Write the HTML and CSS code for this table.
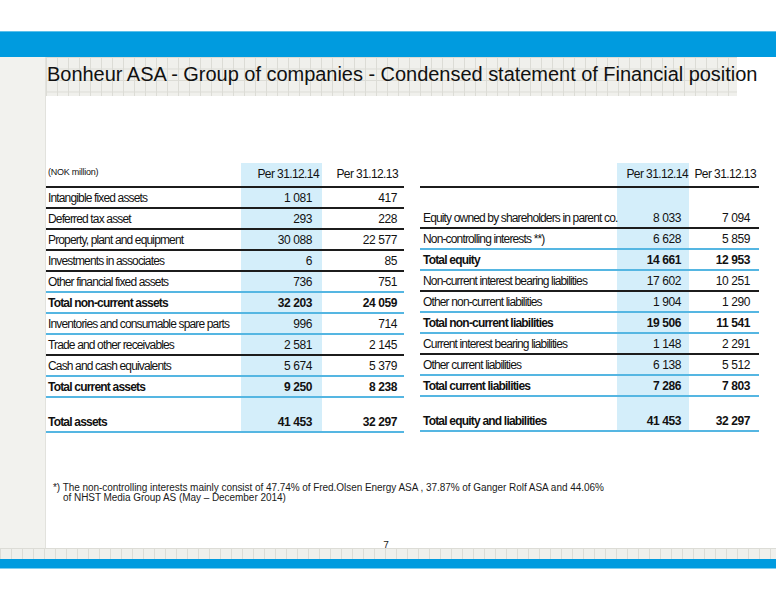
FILE: index.html
```html
<!DOCTYPE html>
<html lang="en">
<head>
    <meta charset="UTF-8">
    <meta name="viewport" content="width=device-width, initial-scale=1.0">
    <title>Bonheur ASA - Condensed statement of Financial position</title>
    <link rel="stylesheet" href="styles.css">
</head>
<body>
    <div class="slide">
        <div class="topbar"></div>

        <div class="frame">
            <aside class="sidebar"></aside>

            <main class="content">
                <header class="title-band">
                    <h1>Bonheur ASA - Group of companies - Condensed statement of Financial position</h1>
                </header>

                <section class="tables">
                    <!-- Assets -->
                    <table class="sheet assets">
                        <thead>
                            <tr>
                                <th class="unit">(NOK million)</th>
                                <th class="hl">Per 31.12.14</th>
                                <th>Per 31.12.13</th>
                            </tr>
                        </thead>
                        <tbody>
                            <tr class="black"><td>Intangible fixed assets</td><td class="hl">1 081</td><td>417</td></tr>
                            <tr class="black"><td>Deferred tax asset</td><td class="hl">293</td><td>228</td></tr>
                            <tr class="black"><td>Property, plant and equipment</td><td class="hl">30 088</td><td>22 577</td></tr>
                            <tr class="black"><td>Investments in associates</td><td class="hl">6</td><td>85</td></tr>
                            <tr class="blue"><td>Other financial fixed assets</td><td class="hl">736</td><td>751</td></tr>
                            <tr class="blue total"><td>Total non-current assets</td><td class="hl">32 203</td><td>24 059</td></tr>
                            <tr class="blue"><td>Inventories and consumable spare parts</td><td class="hl">996</td><td>714</td></tr>
                            <tr class="black"><td>Trade and other receivables</td><td class="hl">2 581</td><td>2 145</td></tr>
                            <tr class="blue"><td>Cash and cash equivalents</td><td class="hl">5 674</td><td>5 379</td></tr>
                            <tr class="blue total"><td>Total current assets</td><td class="hl">9 250</td><td>8 238</td></tr>
                            <tr class="spacer"><td></td><td class="hl"></td><td></td></tr>
                            <tr class="blue total"><td>Total assets</td><td class="hl">41 453</td><td>32 297</td></tr>
                        </tbody>
                    </table>

                    <!-- Equity and liabilities -->
                    <table class="sheet liabilities">
                        <thead>
                            <tr>
                                <th class="unit"></th>
                                <th class="hl">Per 31.12.14</th>
                                <th>Per 31.12.13</th>
                            </tr>
                        </thead>
                        <tbody>
                            <tr class="plain"><td></td><td class="hl"></td><td></td></tr>
                            <tr class="black"><td>Equity owned by shareholders in parent co.</td><td class="hl">8 033</td><td>7 094</td></tr>
                            <tr class="blue"><td>Non-controlling interests **)</td><td class="hl">6 628</td><td>5 859</td></tr>
                            <tr class="blue total"><td>Total equity</td><td class="hl">14 661</td><td>12 953</td></tr>
                            <tr class="black"><td>Non-current interest bearing liabilities</td><td class="hl">17 602</td><td>10 251</td></tr>
                            <tr class="blue"><td>Other non-current liabilities</td><td class="hl">1 904</td><td>1 290</td></tr>
                            <tr class="blue total"><td>Total non-current liabilities</td><td class="hl">19 506</td><td>11 541</td></tr>
                            <tr class="black"><td>Current interest bearing liabilities</td><td class="hl">1 148</td><td>2 291</td></tr>
                            <tr class="blue"><td>Other current liabilities</td><td class="hl">6 138</td><td>5 512</td></tr>
                            <tr class="blue total"><td>Total current liabilities</td><td class="hl">7 286</td><td>7 803</td></tr>
                            <tr class="spacer"><td></td><td class="hl"></td><td></td></tr>
                            <tr class="blue total"><td>Total equity and liabilities</td><td class="hl">41 453</td><td>32 297</td></tr>
                        </tbody>
                    </table>
                </section>

                <p class="note">*) The non-controlling interests mainly consist of 47.74% of Fred.Olsen Energy ASA , 37.87% of Ganger Rolf ASA and 44.06%<br>of NHST Media Group AS (May – December 2014)</p>

                <div class="page-no">7</div>
            </main>
        </div>

        <div class="grid-strip"></div>
        <div class="bottombar"></div>
    </div>
</body>
</html>
```

FILE: styles.css
```css
* {
    margin: 0;
    padding: 0;
    box-sizing: border-box;
}

body {
    background: #ffffff;
    color: #1a1a1a;
    font-family: 'Liberation Sans', Arial, sans-serif;
}

.slide {
    width: 776px;
    height: 600px;
    padding-top: 31px;
    display: flex;
    flex-direction: column;
}

/* Blue bars */
.topbar {
    height: 26px;
    background: #009bdf;
    border-top: 1px solid #5cc0ea;
}

.bottombar {
    height: 10px;
    background: #009bdf;
    border-bottom: 1px solid #7fcdef;
}

/* Grid paper look */
.title-band,
.grid-strip {
    background-color: #f0f0ec;
    background-image:
        linear-gradient(to right, #dcdcd6 1px, transparent 1px),
        linear-gradient(to bottom, #dcdcd6 1px, transparent 1px);
    background-size: 11px 11.5px;
}

.grid-strip {
    height: 11px;
    background-size: 11px 20px;
}

.frame {
    height: 491px;
    display: flex;
}

.sidebar {
    flex: none;
    width: 46px;
    background: #f2f2ee;
    border-right: 1px solid #e2e2dd;
}

.content {
    flex: 1;
    min-width: 0;
    display: flex;
    flex-direction: column;
}

.title-band {
    width: 691px;
    height: 39px;
    padding: 5px 0 0 1px;
}

.title-band h1 {
    font-weight: normal;
    font-size: 20px;
    line-height: 24px;
    letter-spacing: -0.03px;
    white-space: nowrap;
    color: #111111;
}

/* Tables */
.tables {
    display: flex;
    align-items: flex-start;
    gap: 16px;
    margin-top: 67px;
}

.sheet {
    border-collapse: separate;
    border-spacing: 0;
    table-layout: fixed;
    font-size: 12px;
    color: #111111;
}

.assets {
    width: 358px;
}

.liabilities {
    width: 339px;
}

.assets th:nth-child(1) { width: 195px; }
.assets th:nth-child(2) { width: 81px; }
.assets th:nth-child(3) { width: 82px; }

.liabilities th:nth-child(1) { width: 197px; }
.liabilities th:nth-child(2) { width: 72px; }
.liabilities th:nth-child(3) { width: 70px; }

.sheet th {
    font-weight: normal;
    font-size: 12px;
    letter-spacing: -0.6px;
    line-height: 23px;
    text-align: right;
    border-bottom: 2px solid #1c1c1c;
    white-space: nowrap;
}

.assets th:nth-child(2) { padding-right: 3px; }
.assets th:nth-child(3) { padding-right: 6px; }
.liabilities th:nth-child(2) { padding-right: 1px; }
.liabilities th:nth-child(3) { padding-right: 3px; }

.sheet th.unit {
    text-align: left;
    vertical-align: top;
    font-size: 9px;
    letter-spacing: -0.25px;
    line-height: 12px;
    padding: 3px 0 0 2px;
}

.sheet td {
    padding-top: 2px;
    line-height: 17px;
    text-align: right;
    letter-spacing: -0.4px;
    white-space: nowrap;
    border-bottom: 2px solid transparent;
}

.sheet td:first-child {
    text-align: left;
    letter-spacing: -0.85px;
    padding-left: 2px;
}

.assets td:nth-child(2) { padding-right: 10px; }
.assets td:nth-child(3) { padding-right: 7px; }
.liabilities td:first-child { padding-left: 3px; }
.liabilities td:nth-child(2) { padding-right: 8px; }
.liabilities td:nth-child(3) { padding-right: 9px; }

.sheet .hl {
    background: #d4eefa;
}

.sheet tr.black td { border-bottom-color: #1c1c1c; }
.sheet tr.blue td { border-bottom-color: #55b6e2; }

.sheet tr.total td {
    font-weight: bold;
}

.sheet tr.total td:first-child {
    letter-spacing: -0.8px;
}

.sheet tr.spacer td {
    height: 14px;
    padding-top: 0;
    border-bottom: none;
}

.sheet tr.plain td {
    height: 20px;
    padding-top: 0;
    border-bottom: none;
}

/* Footnote and page number */
.note {
    margin-top: 50px;
    padding-left: 17px;
    text-indent: -10px;
    font-size: 10px;
    letter-spacing: -0.05px;
    line-height: 10px;
    color: #1a1a1a;
}

.page-no {
    margin-top: auto;
    margin-bottom: -3px;
    padding-right: 50px;
    text-align: center;
    font-size: 10px;
    line-height: 10px;
}
```
